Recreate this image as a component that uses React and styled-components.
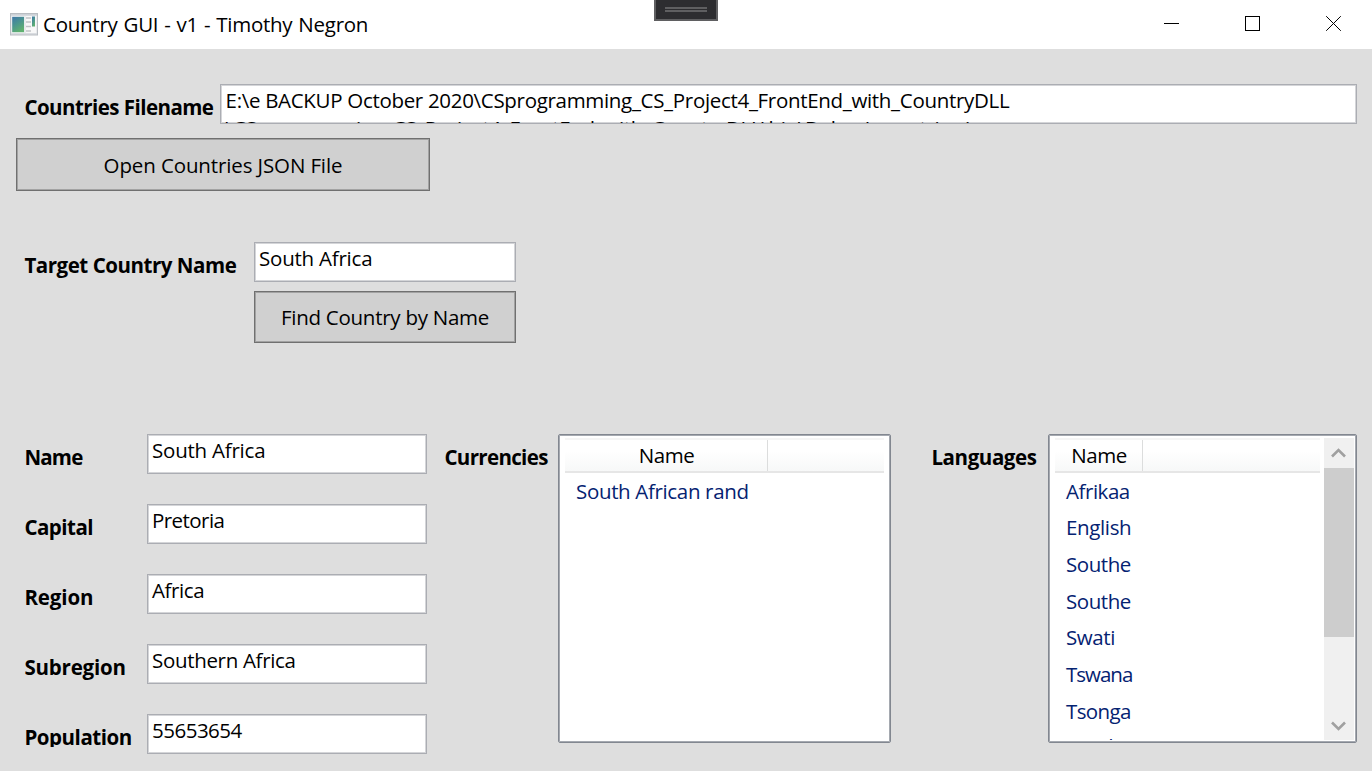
import React from "react";
import styled, { createGlobalStyle } from "styled-components";

const GlobalStyle = createGlobalStyle`
  * { box-sizing: border-box; }
  body {
    margin: 0;
    background: #dedede;
    color: #000;
    font: 400 20.5px/28px "Open Sans", "Noto Sans", sans-serif;
  }
`;

const Window = styled.div`
  width: 1372px;
  height: 771px;
  overflow: hidden;
  display: flex;
  flex-direction: column;
  position: relative;
`;

const TitleBar = styled.header`
  height: 49px;
  flex: none;
  background: #fff;
  display: flex;
  align-items: center;
  padding: 0 29px 0 10px;
`;

const Title = styled.h1`
  margin: 0 0 2px 5px;
  font: inherit;
  flex: 1;
  letter-spacing: -0.26px;
  word-spacing: 0.9px;
`;

const WindowControls = styled.div`
  display: flex;
  gap: 65px;
  padding-right: 1px;
  margin-top: -2px;
`;

const ControlIcon = styled.svg`
  width: 16px;
  height: 16px;
  display: block;
  fill: none;
  stroke: #000;
`;

const DebugHandle = styled.div`
  position: absolute;
  left: 654px;
  top: 0;
  width: 64px;
  height: 21px;
  border: 2px solid #5f5f61;
  border-top: 0;
  background: #2d2d30;
  padding: 7px 9px 0;
`;

const Grip = styled.div`
  height: 5px;
  border: solid #5f5f61;
  border-width: 2px 0;
`;

const Content = styled.main`
  flex: 1;
  padding: 35px 15px 0 16px;
  display: flex;
  flex-direction: column;
`;

const Row = styled.div`
  display: flex;
  align-items: flex-start;
`;

const Label = styled.label`
  flex: none;
  width: ${(p) => p.$width}px;
  height: ${(p) => p.$height || 37}px;
  padding: 9px 0 0 8.4px;
  overflow: hidden;
  font-weight: 700;
  white-space: nowrap;
  letter-spacing: ${(p) => p.$spacing}px;
`;

const TextBox = styled.div`
  width: ${(p) => (p.$width ? `${p.$width}px` : "auto")};
  flex: ${(p) => (p.$width ? "none" : "1")};
  height: 40px;
  overflow: hidden;
  background: #fff;
  border: 1px solid #abadb3;
  box-shadow: inset 0 0 0 1px #d4d5d8;
  padding: 1px 3px 0 ${(p) => p.$indent || 4}px;
  white-space: pre-line;
  letter-spacing: ${(p) => p.$spacing}px;
`;

const Button = styled.button`
  display: block;
  width: ${(p) => p.$width}px;
  height: ${(p) => p.$height}px;
  background: #d0d0d0;
  border: 1px solid #707070;
  box-shadow: inset 0 0 0 1px #a2a2a2;
  font: inherit;
  color: inherit;
  padding: 0;
  letter-spacing: ${(p) => p.$spacing}px;
`;

const OpenRow = styled(Row)`
  margin-top: 14px;
`;

const SearchRow = styled(Row)`
  margin-top: 51px;
`;

const SearchFields = styled.div`
  display: grid;
  gap: 9px;
`;

const Details = styled(Row)`
  margin-top: 91px;
`;

const Fields = styled.div`
  display: grid;
  gap: 30px;
  margin-right: 9px;
`;

const ListBox = styled.section`
  flex: none;
  width: ${(p) => p.$width}px;
  height: 309px;
  display: flex;
  gap: 4px;
  background: #fff;
  border: 1px solid #828790;
  border-radius: 2px;
  box-shadow: inset 0 0 0 1px #a5a9b0;
  padding: 3px 2px 2px 6px;
  margin-right: ${(p) => p.$after || 0}px;
`;

const Table = styled.div`
  flex: 1;
  overflow: hidden;
  padding-right: ${(p) => p.$inset || 0}px;
`;

const TableHead = styled.div`
  display: flex;
  height: 35px;
  border-top: 2px solid #f5f5f5;
  border-bottom: 2px solid #e6e6e6;
  background: linear-gradient(#fff 35%, #f7f8f8);
`;

const HeadCell = styled.div`
  width: ${(p) => p.$width}px;
  border-right: 1px solid #dcdddd;
  text-align: center;
  padding: 1px 0 0 1px;
  letter-spacing: -0.4px;
`;

const Item = styled.div`
  height: 36.65px;
  padding: 3.7px 0 0 11px;
  color: #042271;
  white-space: nowrap;
  letter-spacing: ${(p) => p.$spacing}px;

  &:nth-child(9) {
    margin-top: -1px;
  }
`;

const ScrollBar = styled.div`
  width: 30px;
  background: #f0f0f0;
  display: flex;
  flex-direction: column;
`;

const Thumb = styled.div`
  height: 169px;
  background: #cdcdcd;
`;

const Arrow = styled.svg`
  display: block;
  width: 30px;
  height: 30px;
  fill: none;
  stroke: #a0a0a0;
  stroke-width: 2.6;
  margin-top: ${(p) => (p.$end ? "auto" : 0)};
`;

const fields = [
  { label: "Name", ls: -0.8, value: "South Africa", vs: -0.22 },
  { label: "Capital", ls: -0.5, value: "Pretoria", vs: -0.55 },
  { label: "Region", ls: -0.1, value: "Africa", vs: -0.4 },
  { label: "Subregion", ls: -0.2, value: "Southern Africa", vs: -0.32 },
  { label: "Population", ls: -0.45, value: "55653654", vs: -0.5, clip: 33 },
];

const languages = [
  ["Afrikaa", -0.45],
  ["English", -0.35],
  ["Southe", -0.45],
  ["Southe", -0.45],
  ["Swati", -0.4],
  ["Tswana", -1],
  ["Tsonga", -0.6],
  ["Venda", -0.4],
];

const filename =
  "E:\\e BACKUP October 2020\\CSprogramming_CS_Project4_FrontEnd_with_CountryDLL\n" +
  "\\CSprogramming_CS_Project4_FrontEnd_with_CountryDLL\\bin\\Debug\\countries.json";

function AppIcon() {
  return (
    <svg width="28" height="23" viewBox="0 0 28 23">
      <defs>
        <linearGradient id="pane" x1="0" y1="0" x2="0.5" y2="1">
          <stop offset="0" stopColor="#3f76a8" />
          <stop offset="0.5" stopColor="#4a9490" />
          <stop offset="1" stopColor="#5fb070" />
        </linearGradient>
        <linearGradient id="frame" x1="0" y1="0" x2="0" y2="1">
          <stop offset="0" stopColor="#c3c9d0" />
          <stop offset="0.15" stopColor="#e2e5e8" />
          <stop offset="1" stopColor="#d8dbdf" />
        </linearGradient>
      </defs>
      <rect x="0.5" y="0.5" width="27" height="21.5" fill="url(#frame)" stroke="#b9bdc2" />
      <rect x="1.5" y="3" width="13" height="17" fill="#f4f6f6" />
      <rect x="2.2" y="3.8" width="11.8" height="15.4" fill="url(#pane)" />
      <rect x="15.5" y="3" width="11" height="17" fill="#f8f8f8" />
      <path d="M16 5h5M16 9h5M16 13.5h5M16 18h5" stroke="#c0c2c5" strokeWidth="1.6" />
      <rect x="22" y="3.5" width="3" height="10" fill="url(#pane)" />
    </svg>
  );
}

export default function App() {
  return (
    <Window>
      <GlobalStyle />
      <TitleBar>
        <AppIcon />
        <Title>Country GUI - v1 - Timothy Negron</Title>
        <WindowControls>
          <ControlIcon><path d="M0 7.5h15" /></ControlIcon>
          <ControlIcon><rect x="0.5" y="0.5" width="14" height="14" /></ControlIcon>
          <ControlIcon><path d="M0.2 0.2l14.6 14.6M14.8 0.2l-14.6 14.6" /></ControlIcon>
        </WindowControls>
      </TitleBar>
      <DebugHandle><Grip /></DebugHandle>

      <Content>
        <Row>
          <Label $width={204} $spacing={-0.54}>Countries Filename</Label>
          <TextBox $indent={4.6} $spacing={-0.31}>{filename}</TextBox>
        </Row>
        <OpenRow>
          <Button $width={414} $height={53} $spacing={-0.12}>Open Countries JSON File</Button>
        </OpenRow>

        <SearchRow>
          <Label $width={238} $spacing={-0.46}>Target Country Name</Label>
          <SearchFields>
            <TextBox $width={262} $spacing={-0.22}>South Africa</TextBox>
            <Button $width={262} $height={52} $spacing={-0.26}>Find Country by Name</Button>
          </SearchFields>
        </SearchRow>

        <Details>
          <Fields>
            {fields.map((f) => (
              <Row key={f.label}>
                <Label $width={131} $height={f.clip} $spacing={f.ls}>{f.label}</Label>
                <TextBox $width={280} $spacing={f.vs}>{f.value}</TextBox>
              </Row>
            ))}
          </Fields>
          <Label $width={122} $spacing={-0.65}>Currencies</Label>
          <ListBox $width={333} $after={32}>
            <Table $inset={4}>
              <TableHead><HeadCell $width={203}>Name</HeadCell></TableHead>
              <Item $spacing={-0.34}>South African rand</Item>
            </Table>
          </ListBox>
          <Label $width={125} $spacing={-0.4}>Languages</Label>
          <ListBox $width={309}>
            <Table>
              <TableHead><HeadCell $width={88}>Name</HeadCell></TableHead>
              {languages.map(([name, spacing], i) => (
                <Item key={i} $spacing={spacing}>{name}</Item>
              ))}
            </Table>
            <ScrollBar>
              <Arrow><path d="M8 18.5l6.5-6.5 6.5 6.5" /></Arrow>
              <Thumb />
              <Arrow $end><path d="M8 12.5l6.5 6.5 6.5-6.5" /></Arrow>
            </ScrollBar>
          </ListBox>
        </Details>
      </Content>
    </Window>
  );
}
